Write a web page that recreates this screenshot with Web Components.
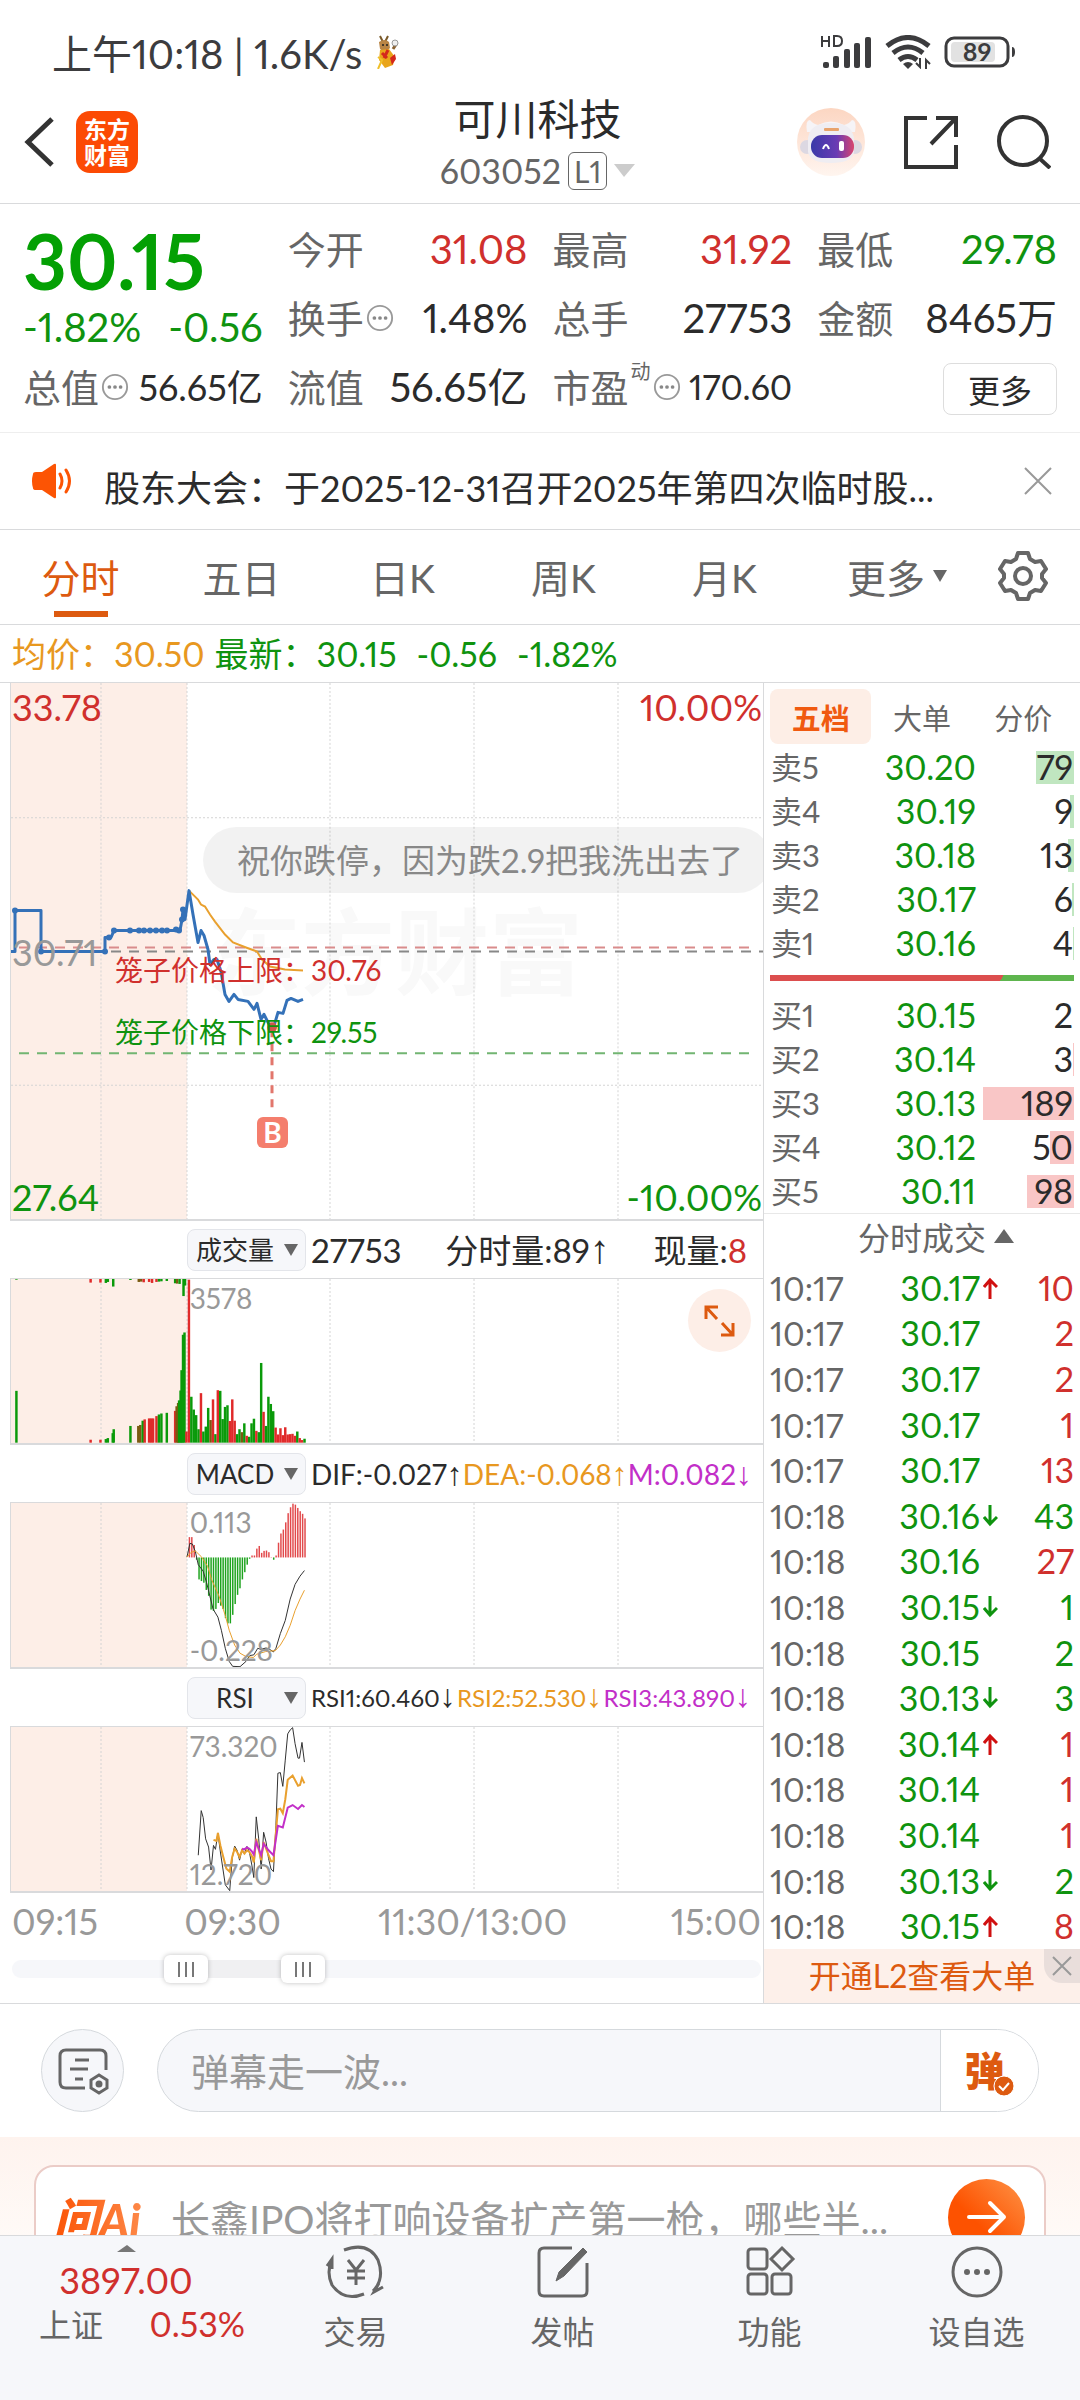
<!DOCTYPE html>
<html lang="zh-CN">
<head>
<meta charset="utf-8">
<meta name="viewport" content="width=device-width, initial-scale=1">
<title>可川科技 603052</title>
<style>
    :root {
        --text: #2b2b2b;
        --label: #666;
        --muted: #999;
        --green: #0f930f;
        --red: #d0302d;
        --orange: #dd5a10;
        --yellow: #e8981f;
        --purple: #c22fc8;
        --line: #d9dadc;
        --grid: #d4d4d4;
        --soft: #f6f7fa;
        --blush: #fdeee7;
        --large: 40px;
        --big: 38px;
        --medium: 36px;
        --base: 32px;
        --small: 28px;
    }
    html, body {
        height: 100%;
        margin: 0;
    }
    body {
        display: flex;
        flex-direction: column;
        background: #fff;
        color: var(--text);
        font-family: Lato, "Noto Sans CJK SC", sans-serif;
        font-variant-numeric: proportional-nums;
        font-size: var(--base);
    }
    main {
        flex: 1;
        min-height: 0;
        overflow: hidden auto;
        scrollbar-width: none;
    }
    .market {
        display: grid;
        grid-template-columns: minmax(0, 1fr) 317px;
        border-bottom: 1px solid var(--line);
    }
    .charts, .side {
        display: flex;
        flex-direction: column;
    }
    .side {
        border-left: 1px solid var(--line);
    }
</style>
</head>
<body>
<status-bar></status-bar>
<app-header code="603052" level="L1">可川科技</app-header>
<main>
    <quote-panel></quote-panel>
    <news-bar>股东大会：于2025-12-31召开2025年第四次临时股...</news-bar>
    <period-tabs></period-tabs>
    <price-summary></price-summary>
    <section class="market">
        <div class="charts">
            <trend-chart></trend-chart>
            <indicator-chart kind="volume"></indicator-chart>
            <indicator-chart kind="macd"></indicator-chart>
            <indicator-chart kind="rsi"></indicator-chart>
            <time-axis></time-axis>
            <range-slider from="216" to="382"></range-slider>
        </div>
        <div class="side">
            <order-book></order-book>
            <tick-list></tick-list>
            <promo-link>开通L2查看大单</promo-link>
        </div>
    </section>
    <danmaku-bar></danmaku-bar>
    <ai-card>长鑫IPO将打响设备扩产第一枪，哪些半...</ai-card>
</main>
<bottom-nav></bottom-nav>

<script>
const reset = `
    :host, * { box-sizing: border-box; }
    button, input, select {
        margin: 0;
        padding: 0;
        border: 0;
        background: none;
        color: inherit;
        font: inherit;
        font-variant-numeric: inherit;
    }
    a { color: inherit; text-decoration: none; }
    svg { display: block; }
    table { border-collapse: collapse; }
    td, th { padding: 0; font-weight: normal; }
    .red { color: var(--red); }
    .green { color: var(--green); }
    .yellow { color: var(--yellow); }
    .purple { color: var(--purple); }
`;

class BaseElement extends HTMLElement {
    constructor() {
        super();
        this.attachShadow({ mode: 'open' });
    }

    connectedCallback() {
        this.shadowRoot.innerHTML = `<style>${reset}${this.styles()}</style>${this.render()}`;
    }
}

class StatusBar extends BaseElement {
    styles() {
        return `
            :host {
                display: flex;
                align-items: center;
                justify-content: space-between;
                height: 103px;
                padding: 0 64px 0 52px;
                color: #3c3c3e;
                font-size: var(--large);
            }
            div { display: flex; align-items: center; gap: 13px; }
        `;
    }

    render() {
        return `
            <div>
                <span>上午10:18 | 1.6K/s</span>
                <svg width="24" height="34" viewBox="0 0 24 34">
                    <path d="M5 1l3 6M13 1l-3 6" stroke="#7a5a2a" stroke-width="2"/>
                    <path d="M4 7q6-4 10 0l1 6q-5 6-10 1z" fill="#b98545"/>
                    <path d="M5 15l9-1 6 8-2 8-8 3-6-8z" fill="#e9a51a"/>
                    <path d="M7 18l5 5M13 15l-4 8" stroke="#d5271c" stroke-width="3"/>
                    <path d="M15 23l5-4 1 5-4 6z" fill="#d5271c"/>
                    <path d="M3 22l4 3-4 9" stroke="#f0c02a" stroke-width="2" fill="none"/>
                    <path d="M18 14l4-6" stroke="#8a6232" stroke-width="3"/>
                    <circle cx="20" cy="8" r="3" fill="#eee" stroke="#999"/>
                    <circle cx="8" cy="10" r="1" fill="#222"/><circle cx="12" cy="10" r="1" fill="#222"/>
                </svg>
            </div>
            <div>
                <svg width="52" height="34" viewBox="0 0 52 34" fill="#3c3c3e">
                    <g fill="none" stroke="#3c3c3e" stroke-width="2"><path d="M2 1v11M9 1v11M2 6h7M14 2v9h3q5 0 5-5t-5-5h-3z"/></g>
                    <rect x="3" y="27" width="6" height="6" rx="2"/><rect x="13" y="21" width="6" height="12" rx="2"/>
                    <rect x="24" y="14" width="6" height="19" rx="2"/><rect x="34" y="8" width="6" height="25" rx="2"/>
                    <rect x="45" y="2" width="6" height="31" rx="2"/>
                </svg>
                <svg width="46" height="34" viewBox="0 0 46 34">
                    <g fill="none" stroke="#3c3c3e" stroke-width="5">
                        <path d="M2 11q21-17 42 0"/><path d="M8 18q15-12 30 0"/><path d="M14 25q9-7 18 0"/>
                    </g>
                    <path d="M18 29q5-4 10 0l-5 5z" fill="#3c3c3e"/>
                    <path d="M35 23v9l-4-4M41 34v-9l4 4" fill="none" stroke="#3c3c3e" stroke-width="2"/>
                </svg>
                <svg width="72" height="32" viewBox="0 0 72 32" font-family="Lato" font-size="25" font-weight="700">
                    <rect x="2" y="2" width="62" height="28" rx="8" fill="none" stroke="#3c3c3e" stroke-width="3"/>
                    <rect x="7" y="6" width="44" height="20" rx="4" fill="#e2e2e2"/>
                    <path d="M68 11q3 0 3 5t-3 5z" fill="#3c3c3e"/>
                    <text x="33" y="25" text-anchor="middle" fill="#3c3c3e">89</text>
                </svg>
            </div>
        `;
    }
}

class AppHeader extends BaseElement {
    styles() {
        return `
            :host {
                display: grid;
                grid-template-columns: 1fr auto 1fr;
                grid-template-rows: 100%;
                align-items: center;
                height: 101px;
                padding: 0 29px 22px 24px;
                border-bottom: 1px solid var(--line);
            }
            .left, .right { display: flex; align-items: center; }
            .left { gap: 21px; }
            .right { justify-content: flex-end; gap: 39px; }
            .logo {
                display: grid;
                place-content: center;
                width: 62px;
                height: 62px;
                border-radius: 14px;
                background: #fc4a04;
                color: #fff;
                font-size: 23px;
                font-weight: 700;
                line-height: 26px;
            }
            .title { text-align: center; }
            h1 { margin: 0; font-size: 42px; font-weight: 400; line-height: 50px; }
            .code {
                display: flex;
                align-items: center;
                gap: 7px;
                margin: 7px auto 0;
                color: var(--label);
                font-size: 34px;
                line-height: 40px;
            }
            .level {
                padding: 0 5px;
                border: 1px solid var(--label);
                border-radius: 6px;
                font-size: 30px;
                line-height: 36px;
            }
        `;
    }

    render() {
        return `
            <div class="left">
                <button aria-label="返回"><svg width="31" height="50" viewBox="0 0 31 50" fill="none" stroke="#333" stroke-width="5"><path d="M28 2L4 25l24 23"/></svg></button>
                <a class="logo" href="#">东方<br>财富</a>
            </div>
            <div class="title">
                <h1><slot></slot></h1>
                <button class="code">${this.getAttribute('code')}<span class="level">${this.getAttribute('level')}</span>
                    <svg width="21" height="13" viewBox="0 0 21 13"><path d="M0 0h21L10 13z" fill="#ccc"/></svg>
                </button>
            </div>
            <div class="right">
                <button aria-label="助手"><svg width="68" height="68" viewBox="0 0 68 68">
                    <defs>
                        <linearGradient id="disc" x2="0" y2="1"><stop stop-color="#fcd6c2"/><stop offset="1" stop-color="#fff5ef"/></linearGradient>
                        <linearGradient id="visor"><stop stop-color="#3a3aa8"/><stop offset="0.6" stop-color="#6a3bb4"/><stop offset="1" stop-color="#d8456e"/></linearGradient>
                    </defs>
                    <circle cx="34" cy="34" r="34" fill="url(#disc)"/>
                    <path d="M10 24q-2-12 3-12 3 4 8 5 13-7 26 0 5-1 8-5 5 0 3 12z" fill="#f6f4f7"/>
                    <circle cx="10" cy="39" r="7" fill="#dcd8e2"/><circle cx="58" cy="39" r="7" fill="#dcd8e2"/>
                    <path d="M11 30q2-15 23-15t23 15v14q-2 11-23 11T11 44z" fill="#efedf2"/>
                    <rect x="14" y="27" width="43" height="23" rx="11" fill="url(#visor)"/>
                    <path d="M26 41q3-8 6 0" fill="none" stroke="#fff" stroke-width="2"/>
                    <rect x="42" y="33" width="5" height="10" rx="2" fill="#fff"/>
                    <rect x="27" y="20" width="15" height="3" rx="1" fill="#e8a36d"/>
                </svg></button>
                <button aria-label="分享"><svg width="54" height="54" viewBox="0 0 54 54" fill="none" stroke="#333" stroke-width="4"><path d="M23 3H2v49h50V30M32 3h20v19M51 4L27 29"/></svg></button>
                <button aria-label="搜索"><svg width="54" height="54" viewBox="0 0 54 54" fill="none" stroke="#333" stroke-width="4"><circle cx="26" cy="26" r="24"/><path d="M42 43l11 10"/></svg></button>
            </div>
        `;
    }
}

/* One label and value pair of the quote grid */
class QuoteItem extends BaseElement {
    styles() {
        return `
            :host {
                display: flex;
                align-items: center;
                justify-content: space-between;
                height: 48px;
                font-size: var(--large);
                line-height: 48px;
                white-space: nowrap;
            }
            .label { display: flex; align-items: center; gap: 2px; color: var(--label); font-size: var(--big); }
            sup { align-self: flex-start; font-size: 20px; line-height: 16px; }
        `;
    }

    render() {
        const note = this.getAttribute('note');
        const hint = this.hasAttribute('hint') ? `
            <svg width="28" height="28" viewBox="0 0 30 30"><circle cx="15" cy="15" r="13" fill="none" stroke="#999" stroke-width="2"/>
            <g fill="#888"><circle cx="9" cy="15" r="2"/><circle cx="15" cy="15" r="2"/><circle cx="21" cy="15" r="2"/></g></svg>` : '';
        return `
            <span class="label">${this.getAttribute('label')}${note ? `<sup>${note}</sup>` : ''}${hint}</span>
            <span class="${this.getAttribute('tone') || ''}"><slot></slot></span>
        `;
    }
}

class QuotePanel extends BaseElement {
    styles() {
        return `
            :host {
                display: grid;
                grid-template-columns: repeat(4, minmax(0, 1fr));
                grid-template-rows: repeat(3, 48px);
                gap: 21px 25px;
                padding: 21px 23px;
                border-bottom: 1px solid #eee;
            }
            .price {
                display: flex;
                flex-direction: column;
                grid-row: span 2;
                color: var(--green);
                font-size: var(--large);
            }
            .price b { color: #04a004; font-size: 76px; font-weight: 700; line-height: 72px; }
            .price div { display: flex; justify-content: space-between; line-height: 60px; }
            .compact { font-size: var(--medium); }
            .tight { font-size: 34px; }
            .more {
                justify-self: end;
                width: 114px;
                height: 52px;
                border: 1px solid #ddd;
                border-radius: 8px;
            }
        `;
    }

    render() {
        return `
            <div class="price"><b>30.15</b><div><span>-1.82%</span><span>-0.56</span></div></div>
            <quote-item label="今开" tone="red">31.08</quote-item>
            <quote-item label="最高" tone="red">31.92</quote-item>
            <quote-item label="最低" tone="green">29.78</quote-item>
            <quote-item label="换手" hint>1.48%</quote-item>
            <quote-item label="总手">27753</quote-item>
            <quote-item label="金额">8465万</quote-item>
            <quote-item label="总值" hint class="compact">56.65亿</quote-item>
            <quote-item label="流值">56.65亿</quote-item>
            <quote-item label="市盈" note="动" hint class="tight">170.60</quote-item>
            <button class="more">更多</button>
        `;
    }
}

class NewsBar extends BaseElement {
    styles() {
        return `
            :host {
                display: flex;
                align-items: center;
                height: 97px;
                padding: 0 28px 0 31px;
                border-bottom: 1px solid var(--line);
                font-size: var(--medium);
            }
            a { flex: 1; min-width: 0; margin: 14px 32px 0 31px; line-height: 48px; white-space: nowrap; overflow: hidden; }
        `;
    }

    render() {
        return `
            <svg width="42" height="36" viewBox="0 0 42 36">
                <path d="M2 11q0-2 3-2h6L23 1q2-1 2 1v32q0 2-2 1L11 27H5q-3 0-3-2-2-7 0-14z" fill="#fc5404"/>
                <path d="M29 11q4 7 0 14M35 7q7 11 0 22" fill="none" stroke="#fc5404" stroke-width="3" stroke-linecap="round"/>
            </svg>
            <a href="#"><slot></slot></a>
            <button aria-label="关闭"><svg width="28" height="28" viewBox="0 0 28 28" stroke="#999" stroke-width="2"><path d="M1 1l26 26M27 1L1 27"/></svg></button>
        `;
    }
}

class PeriodTabs extends BaseElement {
    styles() {
        return `
            :host {
                display: grid;
                grid-template-columns: repeat(5, 161fr) 184fr 91fr;
                height: 95px;
                border-bottom: 1px solid var(--line);
                color: var(--label);
                font-size: 39px;
            }
            button { display: flex; align-items: center; justify-content: center; gap: 8px; padding-bottom: 2px; }
            button.gear { justify-content: flex-start; padding-left: 9px; }
            button[aria-pressed="true"] {
                color: var(--orange);
                background: linear-gradient(var(--orange), var(--orange)) center 81px / 54px 6px no-repeat;
            }
        `;
    }

    render() {
        const tabs = ['分时', '五日', '日K', '周K', '月K'];
        return tabs.map((tab, i) => `<button aria-pressed="${i === 0}">${tab}</button>`).join('') + `
            <button>更多<svg width="14" height="12" viewBox="0 0 14 12"><path d="M0 0h14L7 12z" fill="#666"/></svg></button>
            <button class="gear" aria-label="设置"><svg width="50" height="50" viewBox="0 0 50 50" fill="none" stroke="#666" stroke-width="4" stroke-linejoin="round">
                <path d="M20 2h10l2 6 5 3 6-1 5 8-4 5v4l4 5-5 8-6-1-5 3-2 6H20l-2-6-5-3-6 1-5-8 4-5v-4l-4-5 5-8 6 1 5-3z"/><circle cx="25" cy="25" r="8"/>
            </svg></button>
        `;
    }
}

class PriceSummary extends BaseElement {
    styles() {
        return `
            :host {
                display: flex;
                align-items: center;
                gap: 10px;
                height: 58px;
                padding: 0 12px;
                border-bottom: 1px solid var(--line);
                font-size: 34px;
                line-height: 56px;
            }
            span { display: flex; align-items: baseline; gap: 20px; }
        `;
    }

    render() {
        return `
            <span class="yellow">均价：30.50</span>
            <span class="green"><span>最新：30.15</span><span>-0.56</span><span>-1.82%</span></span>
        `;
    }
}

/* Vertical guides shared by every plot, in a 752 wide space */
const guides = (height) => `
    <rect width="176" height="${height}" fill="var(--blush)"/>
    <g stroke="var(--grid)" stroke-dasharray="2 2">
        ${[90, 176, 319, 463, 607].map(x => `<path d="M${x} 0V${height}"/>`).join('')}
    </g>
`;

class TrendChart extends BaseElement {
    styles() {
        return `
            :host {
                display: block;
                position: relative;
                height: 538px;
                margin-left: 10px;
                border-bottom: 2px solid var(--line);
                border-left: 1px solid var(--line);
                overflow: hidden;
            }
            svg { position: relative; width: 100%; height: 100%; }
            span { position: absolute; font-size: var(--medium); line-height: 40px; }
            .high { top: 4px; left: 1px; }
            .high-rate { top: 4px; right: 1px; }
            .low { bottom: 2px; left: 1px; }
            .low-rate { bottom: 2px; right: 1px; }
            .mid { top: 249px; left: 1px; color: #999; }
            .limit { font-size: var(--small); left: 104px; }
            .limit.red { top: 267px; }
            .limit.green { top: 329px; }
            .mark { top: 209px; left: 196px; color: #f9f9f9; font-size: 94px; font-weight: 700; line-height: 120px; }
            .comment {
                top: 144px;
                left: 192px;
                right: -8px;
                padding-left: 34px;
                border-radius: 33px;
                background: rgba(0, 0, 0, 0.05);
                color: #888;
                font-size: 33px;
                line-height: 66px;
                white-space: nowrap;
            }
            .trade {
                top: 434px;
                left: 246px;
                width: 31px;
                height: 31px;
                border-radius: 6px;
                background: #f47e6d;
                color: #fff;
                font-size: 28px;
                font-weight: 700;
                line-height: 31px;
                text-align: center;
            }
        `;
    }

    render() {
        const dots = [[4, 228], [30, 269], [94, 269], [98, 255], [103, 248], [119, 248], [128, 248], [133, 248], [139, 248], [145, 248], [151, 248], [156, 248], [165, 247], [168, 248], [171, 237], [172, 227]];
        return `
            <span class="mark">东方财富</span>
            <svg viewBox="0 0 752 537" preserveAspectRatio="none" fill="none">
                ${guides(537)}
                <path d="M0 135H752M0 403H752" stroke="var(--grid)" stroke-dasharray="2 2"/>
                <path d="M8 265H742" stroke="#d98c8c" stroke-width="2" stroke-dasharray="10 8"/>
                <path d="M64 269H752" stroke="#888" stroke-width="2" stroke-dasharray="10 8"/>
                <path d="M8 371H742" stroke="#72b572" stroke-width="2" stroke-dasharray="10 8"/>
                <polyline stroke="#e9a02e" stroke-width="2" points="178,208 187,217 190,222 194,224 199,232 204,239 214,252 222,260 235,265 246,269 251,277 259,284 274,287 292,288"/>
                <polyline stroke="#3471b8" stroke-width="3" stroke-linejoin="round" points="0,269 4,269 4,228 30,228 30,269 94,269 94,255 100,255 103,248 169,248 171,237 172,227 174,237 178,208 182,232 187,260 190,248 193,253 197,267 199,282 203,277 206,277 210,289 214,312 218,319 223,312 227,317 237,319 243,327 246,321 250,337 253,332 259,344 262,347 267,330 272,331 276,318 280,316 287,319 292,317"/>
                <g fill="#3471b8">${dots.map(([x, y]) => `<circle cx="${x}" cy="${y}" r="3"/>`).join('')}</g>
                <path d="M261 347V430" stroke="#e2766c" stroke-width="3" stroke-dasharray="8 6"/>
                <circle cx="261" cy="345" r="5" fill="#d0584a"/>
            </svg>
            <span class="high red">33.78</span>
            <span class="high-rate red">10.00%</span>
            <span class="mid">30.71</span>
            <span class="low green">27.64</span>
            <span class="low-rate green">-10.00%</span>
            <span class="limit red">笼子价格上限：30.76</span>
            <span class="limit green">笼子价格下限：29.55</span>
            <span class="trade">B</span>
            <span class="comment">祝你跌停，因为跌2.9把我洗出去了</span>
        `;
    }
}

const RED = '#e02a2a';
const GREEN = '#0a9a0a';
const BROWN = '#7a5a10';
const COLORS = { r: RED, g: GREEN, b: BROWN };

/* Bars are [x, height, colour key]; plots use a 1530 x 500 space */
const bar = (x, top, height, color, width = 5) =>
    `<rect x="${x - width / 2}" y="${top}" width="${width}" height="${height}" fill="${color}"/>`;

const line = (points, color, width = 1) =>
    `<polyline points="${points}" fill="none" stroke="${color}" stroke-width="${width}" vector-effect="non-scaling-stroke"/>`;

function volumePlot() {
    const auction = [[11, 158, 'g'], [162, 9, 'r'], [182, 9, 'r'], [193, 11, 'g'], [197, 14, 'g'], [207, 29, 'g'], [209, 41, 'g'], [243, 51, 'g'],
        [259, 51, 'b'], [263, 54, 'b'], [268, 67, 'g'], [272, 71, 'r'], [281, 74, 'r'], [285, 74, 'r'], [289, 74, 'r'], [296, 81, 'r'], [301, 86, 'g'],
        [306, 89, 'g'], [317, 91, 'g'], [334, 97, 'r'], [337, 111, 'b'], [340, 121, 'b'], [342, 129, 'g'], [345, 159, 'g'], [347, 221, 'g'], [350, 329, 'g'], [353, 336, 'g'], [357, 34, 'r']];
    const unmatched = [[11, 2, 'g'], [162, 11, 'r'], [182, 11, 'r'], [193, 12, 'g'], [197, 9, 'g'], [208, 23, 'g'], [243, 3, 'g'], [260, 9, 'b'],
        [265, 8, 'b'], [270, 10, 'r'], [281, 9, 'r'], [287, 12, 'r'], [296, 9, 'r'], [301, 8, 'g'], [306, 7, 'g'], [317, 6, 'g'], [334, 13, 'g'], [338, 14, 'b'], [343, 15, 'g'], [351, 52, 'g'], [354, 20, 'g']];
    const trading = '497r 140g 101g 84g 41g 151r 34g 49g 106g 69b 132r 26g 160r 158g 72g 109g 114g 66r 132r 67r 26g 41g 32b 59g 21r 18g 59g 73g 36r 32g 243g 94r 51g 140g 118g 96g 46r 25r 44r 23r 47r 25r 26r 27r 21r 34g 14r 8r 12g';
    return auction.map(([x, h, c]) => bar(x, 499 - h, h, COLORS[c])).join('') +
        unmatched.map(([x, h, c]) => bar(x, 0, h, COLORS[c])).join('') +
        trading.split(' ').map((item, i) => {
            const h = parseInt(item, 10);
            return bar(362 + i * 4.9, 499 - h, h, COLORS[item.slice(-1)]);
        }).join('');
}

function macdPlot() {
    const values = [62, 62, 38, -7, -67, -72, -77, -99, -117, -159, -163, -157, -139, -147, -157, -185, -201, -201, -175, -142, -114, -94, -67, -45, -22, -4,
        6, 6, 27, 35, 14, 20, 21, 16, 1, -7, 6, 45, 73, 85, 107, 135, 153, 164, 161, 151, 141, 133, 119];
    const bars = values.map((v, i) => bar(363 + i * 4.9, v > 0 ? 166 - v : 166, Math.abs(v), v > 0 ? '#e2494b' : '#1ea31e', 3)).join('');
    return bars + `<g transform="translate(-22 -157)">` +
        line('380,322 386,280 391,282 397,305 403,345 413,365 420,400 433,480 443,505 450,545 458,600 466,640 473,655 488,656 500,640 508,622 516,620 524,600 530,603 541,599 548,603 556,611 561,600 570,555 580,515 590,450 600,405 610,380 619,363', '#333') +
        line('380,322 388,308 397,303 410,322 422,350 430,390 445,440 458,500 466,545 477,590 488,615 500,625 515,628 522,618 540,610 560,607 570,590 580,565 590,530 600,485 610,450 619,423', '#e9a02e') + '</g>';
}

function rsiPlot() {
    return '<g transform="translate(-22 -139)">' +
        line('403,530 409,394 413,415 418,480 424,505 429,575 434,500 438,512 443,462 448,520 458,620 467,638 472,540 477,502 482,515 487,545 492,512 497,525 502,503 507,520 512,560 516,598 521,413 526,480 531,572 536,460 541,490 546,540 551,572 556,580 561,440 565,280 570,278 575,320 580,240 585,160 590,148 595,141 600,190 606,234 609,234 614,186 619,246', '#333') +
        line('434,483 440,486 443,462 448,500 453,530 460,570 467,580 472,535 477,510 482,520 487,535 492,515 497,525 502,515 507,520 512,532 516,552 521,480 531,545 536,490 546,530 551,548 556,548 561,460 565,390 570,388 575,402 580,360 585,300 595,287 606,318 610,316 614,295 619,311', '#e9a02e', 2) +
        line('492,510 497,512 502,506 507,510 512,518 516,528 521,490 531,530 536,495 546,515 556,530 561,480 565,440 575,445 585,385 595,377 606,389 614,377 619,383', '#c22fc8', 2) + '</g>';
}

const INDICATORS = {
    volume: {
        name: '成交量',
        legend: '<span>27753</span><span>分时量:89<i>↑</i></span><span>现量:<em class="red">8</em></span>',
        top: '3578',
        bottom: '',
        plot: volumePlot
    },
    macd: {
        name: 'MACD',
        legend: '<span>DIF:-0.027<i>↑</i></span><span class="yellow">DEA:-0.068<i>↑</i></span><span class="purple">M:0.082<i>↓</i></span>',
        top: '0.113',
        bottom: '-0.228',
        plot: macdPlot
    },
    rsi: {
        name: 'RSI',
        legend: '<span>RSI1:60.460<i>↓</i></span><span class="yellow">RSI2:52.530<i>↓</i></span><span class="purple">RSI3:43.890<i>↓</i></span>',
        top: '73.320',
        bottom: '12.720',
        plot: rsiPlot
    }
};

class IndicatorChart extends BaseElement {
    styles() {
        return `
            :host { display: block; margin-left: 10px; }
            header {
                display: grid;
                grid-template-columns: 119px 1fr;
                align-items: center;
                gap: 5px;
                height: 57px;
                padding: 0 12px 0 23.5%;
            }
            label { position: relative; }
            label svg { position: absolute; top: 15px; right: 8px; pointer-events: none; }
            select {
                appearance: none;
                display: block;
                width: 100%;
                height: 42px;
                padding: 0 30px 0 7px;
                border: 1px solid #e3e5ea;
                border-radius: 8px;
                background: var(--soft);
                font-size: 26px;
                text-align: center;
            }
            .legend { display: flex; justify-content: space-between; white-space: nowrap; line-height: 42px; }
            .volume .legend { padding-right: 4px; font-size: 33px; }
            .macd .legend { font-size: var(--small); }
            .rsi .legend { font-size: 24px; }
            i, em { font-style: normal; }
            i { font-family: "Liberation Sans", sans-serif; font-size: var(--base); line-height: 1; }
            .volume i { font-size: var(--large); }
            .plot { position: relative; height: 167px; border: 1px solid var(--line); border-width: 1px 0 2px 1px; }
            .plot > svg { position: absolute; width: 100%; height: 100%; }
            .value { position: absolute; left: 23.5%; padding-left: 2px; color: var(--muted); font-size: var(--small); line-height: 32px; }
            .top { top: 3px; }
            .bottom { bottom: 1px; }
            .expand {
                position: absolute;
                top: 10px;
                right: 12px;
                display: grid;
                place-items: center;
                width: 63px;
                height: 63px;
                border-radius: 50%;
                background: var(--blush);
            }
        `;
    }

    render() {
        const kind = this.getAttribute('kind');
        const { name, legend, top, bottom, plot } = INDICATORS[kind];
        const expand = kind === 'volume' ? `
            <button class="expand" aria-label="全屏"><svg width="31" height="32" viewBox="0 0 31 32" fill="none" stroke="#dd5a10" stroke-width="3"><path d="M14 2H2v12M2 2l11 12M17 30h12V18M29 30L18 18"/></svg></button>` : '';
        return `
            <div class="${kind}">
                <header>
                    <label><select aria-label="指标"><option>${name}</option></select>
                        <svg width="14" height="12" viewBox="0 0 14 12"><path d="M0 0h14L7 12z" fill="#666"/></svg></label>
                    <div class="legend">${legend}</div>
                </header>
                <div class="plot">
                    <svg viewBox="0 0 752 164" preserveAspectRatio="none">${guides(164)}</svg>
                    <svg viewBox="0 0 1530 500" preserveAspectRatio="none">${plot()}</svg>
                    <span class="value top">${top}</span>
                    <span class="value bottom">${bottom}</span>
                    ${expand}
                </div>
            </div>
        `;
    }
}

class TimeAxis extends BaseElement {
    styles() {
        return `
            :host {
                display: grid;
                grid-template-columns: 23% 1fr auto 1fr;
                height: 56px;
                padding: 0 2px 0 12px;
                color: var(--muted);
                font-size: var(--medium);
                line-height: 56px;
            }
            span:last-child { text-align: right; }
        `;
    }

    render() {
        return '<span>09:15</span><span>09:30</span><span>11:30/13:00</span><span>15:00</span>';
    }
}

class RangeSlider extends BaseElement {
    styles() {
        return `
            :host { display: grid; align-items: center; height: 40px; margin: 0 2px 14px 12px; }
            .track, input { grid-area: 1 / 1; }
            .track {
                height: 18px;
                border-radius: 9px;
                background: linear-gradient(90deg, transparent 23%, #f0f0f2 23%, #f0f0f2 39%, transparent 39%) var(--soft);
            }
            input { appearance: none; width: 100%; height: 40px; pointer-events: none; }
            input::-webkit-slider-thumb {
                appearance: none;
                width: 44px;
                height: 28px;
                border-radius: 6px;
                background:
                    linear-gradient(90deg, #777 2px, transparent 2px 7px, #777 7px 9px, transparent 9px 14px, #777 14px) center / 16px 15px no-repeat,
                    #fff;
                box-shadow: 0 0 5px rgba(0, 0, 0, 0.25);
                pointer-events: auto;
            }
        `;
    }

    render() {
        return `
            <div class="track"></div>
            <input type="range" max="1000" value="${this.getAttribute('from')}" aria-label="起始时间">
            <input type="range" max="1000" value="${this.getAttribute('to')}" aria-label="结束时间">
        `;
    }
}

class OrderBook extends BaseElement {
    styles() {
        return `
            :host { display: block; padding: 0 6px; border-bottom: 1px solid #e8e8e8; }
            nav { display: grid; grid-template-columns: repeat(3, 1fr); height: 62px; padding-top: 6px; }
            nav button { height: 55px; border-radius: 8px; color: var(--label); font-size: 29px; }
            nav button[aria-pressed="true"] { background: #fdeee6; color: #f05a10; font-weight: 700; }
            table { width: 100%; table-layout: fixed; }
            tr { height: 44px; line-height: 44px; }
            th { width: 70px; padding-left: 1px; color: var(--label); font-size: 31px; text-align: left; }
            td { text-align: right; }
            td.green { width: 136px; font-size: 34px; }
            .size {
                padding-right: 1px;
                background: linear-gradient(var(--depth), var(--depth)) right center / var(--width) 33px no-repeat;
                font-size: 34px;
            }
            .sell { --depth: #c0e6c0; }
            .buy { --depth: #f9c6c6; }
            .ratio { height: 6px; margin: 10px 0 12px; background: linear-gradient(120deg, #dc4e4e 76%, #5eb54e 76%); }
        `;
    }

    rows(side, label, rows) {
        return `<table class="${side}">${rows.map(([level, price, size, width]) =>
            `<tr><th scope="row">${label}${level}</th><td class="green">${price}</td><td class="size" style="--width: ${width}px">${size}</td></tr>`
        ).join('')}</table>`;
    }

    render() {
        return `
            <nav><button aria-pressed="true">五档</button><button>大单</button><button>分价</button></nav>
            ${this.rows('sell', '卖', [[5, '30.20', 79, 38], [4, '30.19', 9, 4], [3, '30.18', 13, 6], [2, '30.17', 6, 2], [1, '30.16', 4, 1]])}
            <div class="ratio"></div>
            ${this.rows('buy', '买', [[1, '30.15', 2, 0], [2, '30.14', 3, 1], [3, '30.13', 189, 91], [4, '30.12', 50, 24], [5, '30.11', 98, 47]])}
        `;
    }
}

class TickList extends BaseElement {
    styles() {
        return `
            :host { display: flex; flex: 1; flex-direction: column; padding: 0 6px; }
            button {
                display: flex;
                align-items: center;
                justify-content: center;
                gap: 8px;
                height: 51px;
                padding: 0 0 8px 28px;
                color: var(--label);
            }
            table { flex: 1; display: grid; width: 100%; }
            tbody { display: grid; }
            tr { display: grid; grid-template-columns: 84px 1fr 24px 70px; align-items: center; font-size: 34px; line-height: 44px; }
            .time { color: var(--label); font-size: 33px; }
            .price, .size { text-align: right; }
            .dir { padding-left: 3px; }
        `;
    }

    render() {
        const ticks = [
            ['10:17', '30.17', 'up', 10, 'red'], ['10:17', '30.17', '', 2, 'red'], ['10:17', '30.17', '', 2, 'red'],
            ['10:17', '30.17', '', 1, 'red'], ['10:17', '30.17', '', 13, 'red'], ['10:18', '30.16', 'down', 43, 'green'],
            ['10:18', '30.16', '', 27, 'red'], ['10:18', '30.15', 'down', 1, 'green'], ['10:18', '30.15', '', 2, 'green'],
            ['10:18', '30.13', 'down', 3, 'green'], ['10:18', '30.14', 'up', 1, 'red'], ['10:18', '30.14', '', 1, 'red'],
            ['10:18', '30.14', '', 1, 'red'], ['10:18', '30.13', 'down', 2, 'green'], ['10:18', '30.15', 'up', 8, 'red']
        ];
        const arrows = {
            up: '<svg width="15" height="22" viewBox="0 0 15 22" fill="none" stroke="#d01010" stroke-width="3"><path d="M7 22V3M1 10l6-7 7 7"/></svg>',
            down: '<svg width="15" height="22" viewBox="0 0 15 22" fill="none" stroke="#0f930f" stroke-width="3"><path d="M7 0v19M1 12l6 7 7-7"/></svg>'
        };
        return `
            <button>分时成交<svg width="20" height="14" viewBox="0 0 20 14"><path d="M0 14h20L10 0z" fill="#666"/></svg></button>
            <table><tbody>${ticks.map(([time, price, dir, size, tone]) => `
                <tr><td class="time">${time}</td><td class="price green">${price}</td><td class="dir">${arrows[dir] || ''}</td><td class="size ${tone}">${size}</td></tr>`).join('')}
            </tbody></table>
        `;
    }
}

class PromoLink extends BaseElement {
    styles() {
        return `
            :host { display: block; position: relative; height: 54px; background: #fdf0ea; color: var(--orange); }
            a { display: block; line-height: 54px; text-align: center; }
            button {
                position: absolute;
                top: 0;
                right: 0;
                display: grid;
                place-items: center;
                width: 36px;
                height: 34px;
                border-radius: 0 0 0 18px;
                background: #e9dedb;
            }
        `;
    }

    render() {
        return `
            <a href="#"><slot></slot></a>
            <button aria-label="关闭"><svg width="20" height="20" viewBox="0 0 20 20" stroke="#999" stroke-width="2"><path d="M1 1l18 18M19 1L1 19"/></svg></button>
        `;
    }
}

class DanmakuBar extends BaseElement {
    styles() {
        return `
            :host { display: flex; gap: 33px; padding: 25px 41px; }
            .list, form { height: 83px; border: 1px solid #d5d9dd; background: var(--soft); }
            .list { display: grid; place-items: center; width: 83px; border-radius: 50%; }
            form { display: flex; flex: 1; border-radius: 42px; overflow: hidden; }
            input { flex: 1; min-width: 0; padding: 0 33px; font-size: var(--big); outline: none; }
            input::placeholder { color: var(--muted); }
            .send {
                position: relative;
                width: 98px;
                padding: 0 10px 4px 0;
                border-left: 1px solid #d5d9dd;
                background: #fff;
                color: var(--orange);
                font-size: 40px;
                font-weight: 900;
            }
            .send svg { position: absolute; right: 23px; bottom: 14px; }
        `;
    }

    render() {
        return `
            <button class="list" aria-label="弹幕设置"><svg width="52" height="48" viewBox="0 0 52 48" fill="none" stroke="#666" stroke-width="3">
                <path d="M28 41H9q-6 0-6-6V9q0-6 6-6h34q6 0 6 6v14M18 13h14M13 22h18M18 32h8"/><path d="M42 28l8 5v8l-8 5-8-5v-8z"/><circle cx="42" cy="37" r="2" fill="#666"/>
            </svg></button>
            <form>
                <input type="text" aria-label="弹幕" placeholder="弹幕走一波...">
                <button class="send" type="button">弹<svg width="22" height="22" viewBox="0 0 22 22"><circle cx="11" cy="11" r="10" fill="#dd5a10" stroke="#fff"/><path d="M6 11l4 4 6-7" fill="none" stroke="#fff" stroke-width="2"/></svg></button>
            </form>
        `;
    }
}

class AiCard extends BaseElement {
    styles() {
        return `
            :host { display: block; padding: 28px 34px; background: linear-gradient(#fef3ee, #fffaf7 100px); }
            div {
                display: flex;
                align-items: center;
                height: 104px;
                padding: 0 19px 0 17px;
                border: 2px solid #ebccc7;
                border-radius: 20px;
                background: #fff;
            }
            b {
                width: 92px;
                margin-right: 26px;
                background: linear-gradient(90deg, #fb5305, #fd8a4a);
                background-clip: text;
                color: transparent;
                font-size: 46px;
                font-style: italic;
                font-weight: 900;
                white-space: nowrap;
            }
            a { flex: 1; min-width: 0; color: var(--muted); font-size: 39px; white-space: nowrap; overflow: hidden; }
            button {
                display: grid;
                place-items: center;
                width: 77px;
                height: 77px;
                border-radius: 50%;
                background: linear-gradient(45deg, #fd5200 40%, #fe9448);
            }
        `;
    }

    render() {
        return `
            <div>
                <b>问Ai</b>
                <a href="#"><slot></slot></a>
                <button aria-label="提问"><svg width="40" height="34" viewBox="0 0 40 34" fill="none" stroke="#fff" stroke-width="4" stroke-linecap="round" stroke-linejoin="round"><path d="M2 17h35M23 3l14 14-14 14"/></svg></button>
            </div>
        `;
    }
}

class BottomNav extends BaseElement {
    styles() {
        return `
            :host {
                display: grid;
                grid-template-columns: 252fr repeat(4, 207fr);
                height: 165px;
                border-top: 1px solid var(--line);
                background: var(--soft);
                color: var(--label);
            }
            a { display: flex; flex-direction: column; align-items: center; padding-top: 9px; line-height: 44px; }
            a svg { margin-bottom: 11px; }
            .index svg { margin-bottom: 6px; }
            .index b { font-size: var(--medium); font-weight: 400; }
            .index div { display: flex; align-items: baseline; justify-content: space-between; width: 100%; padding: 0 7px 0 39px; }
            .index div .red { font-size: 34px; }
        `;
    }

    render() {
        const icons = {
            '交易': '<path d="M15 5q24-9 34 10 7 19-5 31M35 49q-20 8-32-9-6-13 0-25M50 38l-5 9 9-5M3 24V14l-5 7"/><path d="M19 15l8 10 8-10M18 26h18M18 33h18M27 25v15"/>',
            '发帖': '<path d="M36 3H8Q3 3 3 8v38q0 5 5 5h38q5 0 5-5V18"/><path d="M20 36l3-9L47 3l4 4-23 24z" fill="#666" stroke-width="1"/>',
            '功能': '<rect x="5" y="4" width="19" height="20" rx="3"/><path d="M39 3l11 11-11 11-11-11z"/><rect x="5" y="29" width="19" height="20" rx="3"/><rect x="29" y="29" width="19" height="20" rx="3"/>',
            '设自选': '<circle cx="27" cy="27" r="24"/><g fill="#666" stroke="none"><circle cx="17" cy="27" r="3"/><circle cx="27" cy="27" r="3"/><circle cx="37" cy="27" r="3"/></g>'
        };
        return `
            <a class="index" href="#">
                <svg width="19" height="7" viewBox="0 0 19 7"><path d="M0 7h19L10 0z" fill="#777"/></svg>
                <b class="red">3897.00</b>
                <div><span>上证</span><span class="red">0.53%</span></div>
            </a>
            ${Object.entries(icons).map(([name, shape]) => `
                <a href="#"><svg width="54" height="54" viewBox="0 0 54 54" fill="none" stroke="#666" stroke-width="3" overflow="visible">${shape}</svg>${name}</a>`).join('')}
        `;
    }
}

customElements.define('status-bar', StatusBar);
customElements.define('app-header', AppHeader);
customElements.define('quote-item', QuoteItem);
customElements.define('quote-panel', QuotePanel);
customElements.define('news-bar', NewsBar);
customElements.define('period-tabs', PeriodTabs);
customElements.define('price-summary', PriceSummary);
customElements.define('trend-chart', TrendChart);
customElements.define('indicator-chart', IndicatorChart);
customElements.define('time-axis', TimeAxis);
customElements.define('range-slider', RangeSlider);
customElements.define('order-book', OrderBook);
customElements.define('tick-list', TickList);
customElements.define('promo-link', PromoLink);
customElements.define('danmaku-bar', DanmakuBar);
customElements.define('ai-card', AiCard);
customElements.define('bottom-nav', BottomNav);
</script>
</body>
</html>
